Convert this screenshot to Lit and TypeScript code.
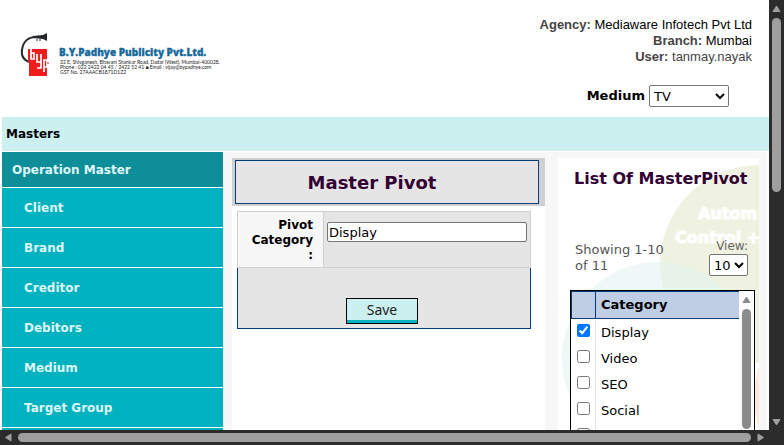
import { LitElement, html, css, svg } from "lit";
import { customElement, property } from "lit/decorators.js";

const MENU = ["Client", "Brand", "Creditor", "Debitors", "Medium", "Target Group", "Employee"];
const CATEGORIES = ["Display", "Video", "SEO", "Social", "Mobile"];

const arrow = (points: string) => html`
  <svg class="arrow" viewBox="0 0 9 9" width="9" height="9" aria-hidden="true">
    ${svg`<polygon points=${points} fill="currentColor" stroke="currentColor" stroke-linejoin="round" />`}
  </svg>
`;
const UP = "1,7.5 4.5,2 8,7.5";
const DOWN = "1,1.5 4.5,7 8,1.5";
const LEFT = "7,1 1.5,4.5 7,8";
const RIGHT = "2,1 7.5,4.5 2,8";

@customElement("company-logo")
export class CompanyLogo extends LitElement {
  static styles = css`
    :host { display: block; width: 200px; height: 50px; }
    svg { display: block; }
    .name { font: 800 10px "Open Sans", "DejaVu Sans", sans-serif; fill: #17699c; stroke: #17699c; stroke-width: 0.3; }
    .small { font: 5px Lato, sans-serif; fill: #222; }
  `;
  render() {
    return html`
      <svg width="200" height="50" viewBox="0 0 200 50" role="img" aria-label="B.Y.Padhye Publicity Pvt.Ltd.">
        <path d="M16 5 C8 5 3 10 2 18 C1 24 4 28 9 30" fill="none" stroke="#252b30" stroke-width="2" />
        <path d="M13 4 L23 3 L27 1 V9 L23 7 L13 6 Z" fill="#20262b" />
        <path d="M17 7 V9 M20 7 V9" stroke="#20262b" />
        <path d="M8 17 H27 V44 H9 V30 H8 Z" fill="#ee1c1c" />
        <path d="M11 17 V27 H14 V21 H11 M17 22 V30 H21 M21 22 V36 H17 M24 40 V28 H27 V35 H24" fill="none" stroke="#fff" stroke-width="1.7" />
        <path d="M27 31 H29" stroke="#ee1c1c" />
        <text class="name" x="39" y="24">B.Y.Padhye Publicity Pvt.Ltd.</text>
        <text class="small" x="40" y="32">32 E, Shivganesh, Bhavani Shankar Road, Dadar (West), Mumbai-400028.</text>
        <text class="small" x="40" y="37">Phone : 022 2422 04 45 / 2422 52 41 ■ Email : vijay@bypadhye.com</text>
        <text class="small" x="40" y="42">GST No. 27AAACB1871D1Z2</text>
      </svg>
    `;
  }
}

@customElement("scroll-track")
export class ScrollTrack extends LitElement {
  @property({ reflect: true }) direction = "vertical";
  static styles = css`
    :host { display: flex; align-items: center; background: #2c2c2c; color: #9f9f9f; gap: 5px; padding: 4px 0 3px; flex-direction: column; }
    :host([direction="horizontal"]) { flex-direction: row; padding: 0 4px; }
    .lane { flex: 1; width: 9px; min-height: 0; }
    .thumb { height: 44%; border-radius: 5px; background: #9f9f9f; }
    :host([direction="horizontal"]) .lane { width: auto; height: 9px; }
    :host([direction="horizontal"]) .thumb { height: 9px; }
    .arrow { display: block; flex: none; }
  `;
  render() {
    const vertical = this.direction === "vertical";
    return html`${arrow(vertical ? UP : LEFT)}
      <div class="lane"><div class="thumb"></div></div>
      ${arrow(vertical ? DOWN : RIGHT)}`;
  }
}

@customElement("app-root")
export class AppRoot extends LitElement {
  static styles = css`
    :host {
      display: grid; grid-template: minmax(0, 1fr) 15px / minmax(0, 1fr) 15px;
      height: 100vh; overflow: hidden; background: #2c2c2c;
      font: 13px/16px "DejaVu Sans", sans-serif; color: #000;
    }
    * { box-sizing: border-box; }
    .page { background: #fff; overflow: hidden; padding-left: 2px; display: flex; flex-direction: column; }
    header { flex: none; height: 117px; display: flex; justify-content: space-between; }
    company-logo { margin: 32px 0 0 18px; }
    .account { padding: 17px 17px 0 0; display: flex; flex-direction: column; text-align: right; }
    .who { margin: 0; font: 13px/16px "Liberation Sans", sans-serif; }
    .who b, .muted { color: #444; }
    .medium { display: flex; align-items: center; gap: 4px; align-self: flex-end; margin: 20px 23px 0 0; font-weight: 700; }
    select, input, button { font-family: inherit; color: #000; }
    select { background: #fff; border: 1px solid #767676; border-radius: 2px; height: 22px; font-size: 13px; padding: 0; }
    .medium select { width: 80px; }
    .bar { flex: none; height: 34px; margin: 0 0 1px; padding: 0 4px; background: #ccefef; font-size: 12px; line-height: 34px; font-weight: 700; }
    .body { flex: 1; min-height: 0; display: grid; grid-template-columns: 221px minmax(0, 1fr); }
    .menu a { display: block; height: 39px; margin-bottom: 1px; padding-left: 22px; background: #00b2bf; color: #dff7f8; font: 700 12px/40px "DejaVu Sans", sans-serif; text-decoration: none; }
    .menu a.group { height: 35px; padding-left: 10px; background: #0d8e98; line-height: 36px; }
    .content { background: #f7f7f7; margin-right: 2px; padding: 6px 8px 0 9px; display: grid; grid-template-columns: minmax(0, 313px) minmax(201px, 1fr); gap: 13px; }
    .panel { background: #fff; min-width: 0; }
    .heading { background: #d0d0d0; padding: 2px 6px 2px 3px; }
    h1 { margin: 0; border: 1px solid #003c7c; background: #e5e5e5; height: 44px; padding-right: 30px; text-align: center; font-size: 18px; line-height: 44px; color: #330033; }
    .form { margin: 5px 14px 0 5px; }
    .field { display: grid; grid-template-columns: 86px 1fr; border: 1px solid #d0d0d0; background: #e5e5e5; height: 57px; }
    .field label { background: #f7f7f7; border-right: 1px solid #d0d0d0; padding: 6px 10px 0 8px; text-align: right; font-size: 12px; line-height: 15px; font-weight: 700; }
    .field input { height: 20px; margin: 10px 3px 0; min-width: 0; border: 1px solid #767676; border-radius: 2px; padding: 0 1px; font-size: 13px; }
    .actions { height: 61px; border: 1px solid #003c7c; border-top: 0; background: #e5e5e5; display: flex; justify-content: center; align-items: flex-end; padding: 0 4px 4px 0; }
    .save { width: 72px; height: 26px; border: 1px solid #000; padding: 0 0 2px; background: #ccefef; box-shadow: inset 0 -3px #00b2bf; font: 14px/20px "Noto Sans", sans-serif; color: #222; }
    .list { position: relative; overflow: hidden; }
    .art { position: absolute; inset: 0; }
    .art text { font: 900 16px "DejaVu Sans", sans-serif; fill: #fff; stroke: #fff; }
    .inner { position: relative; padding: 10px 4px 0 12px; }
    h2 { margin: 0 0 0 4px; font-size: 16px; line-height: 22px; color: #330033; white-space: nowrap; }
    .paging { display: flex; justify-content: space-between; align-items: flex-start; margin: 48px 7px 14px 5px; color: #555; }
    .paging p { margin: 4px 0 0; width: 95px; }
    .view { display: grid; justify-items: end; color: #666; font-size: 12px; }
    .view select { width: 39px; }
    .scroller { border: 1px solid #000; background: #fff; display: flex; height: 144px; overflow: hidden; }
    table { flex: 1; border-collapse: collapse; align-self: flex-start; }
    th { height: 27px; padding: 0 5px; background: #bfcee5; border: 1px solid #003c7c; border-width: 1px 0; text-align: left; }
    td { height: 26px; padding: 2px 5px 0; }
    td:first-child { width: 24px; padding: 0 5px 2px; border-right: 1px solid #e5e5e5; }
    th:first-child { border-right: 1px solid #003c7c; border-left: 1px solid #003c7c; }
    td input { display: block; margin: 0; width: 13px; height: 13px; }
    .mini { width: 15px; background: #fcfcfc; color: #8b8b8b; display: flex; flex-direction: column; align-items: center; padding-top: 4px; gap: 5px; }
    .mini .thumb { width: 9px; height: 120px; border-radius: 5px; background: #8b8b8b; }
    .corner { background: #2c2c2c; }
  `;

  render() {
    return html`
      <div class="page">
        <header>
          <company-logo></company-logo>
          <div class="account">
            <p class="who"><b>Agency:</b> Mediaware Infotech Pvt Ltd</p>
            <p class="who"><b>Branch:</b> Mumbai</p>
            <p class="who muted"><b>User:</b> tanmay.nayak</p>
            <div class="medium">
              <label for="medium">Medium</label>
              <select id="medium"><option>TV</option></select>
            </div>
          </div>
        </header>
        <div class="bar">Masters</div>
        <div class="body">
          <nav class="menu">
            <a class="group" href="#">Operation Master</a>
            ${MENU.map((item) => html`<a href="#">${item}</a>`)}
          </nav>
          <main class="content">
            <section class="panel">
              <div class="heading"><h1>Master Pivot</h1></div>
              <form class="form">
                <div class="field">
                  <label for="category">Pivot Category :</label>
                  <input id="category" type="text" value="Display" />
                </div>
                <div class="actions"><button class="save" type="button">Save</button></div>
              </form>
            </section>
            <section class="panel list">
              <svg class="art" width="201" height="272" aria-hidden="true">
                <circle cx="201" cy="106" r="99" fill="#eff2e1" />
                <circle cx="100" cy="200" r="96" fill="#dff1f0" fill-opacity="0.5" />
                <circle cx="296" cy="240" r="100" fill="#fbd9c8" fill-opacity="0.6" />
                <text x="140" y="61">Autom</text>
                <text x="117" y="85">Control +</text>
              </svg>
              <div class="inner">
                <h2>List Of MasterPivot</h2>
                <div class="paging">
                  <p>Showing 1-10 of 11</p>
                  <div class="view">
                    <label for="view">View:</label>
                    <select id="view"><option>10</option></select>
                  </div>
                </div>
                <div class="scroller">
                  <table>
                    <thead><tr><th></th><th>Category</th></tr></thead>
                    <tbody>
                      ${CATEGORIES.map((name, i) => html`
                        <tr>
                          <td><input type="checkbox" aria-label=${name} ?checked=${i === 0} /></td>
                          <td>${name}</td>
                        </tr>`)}
                    </tbody>
                  </table>
                  <div class="mini">${arrow(UP)}<div class="thumb"></div></div>
                </div>
              </div>
            </section>
          </main>
        </div>
      </div>
      <scroll-track direction="vertical"></scroll-track>
      <scroll-track direction="horizontal"></scroll-track>
      <div class="corner"></div>
    `;
  }
}
